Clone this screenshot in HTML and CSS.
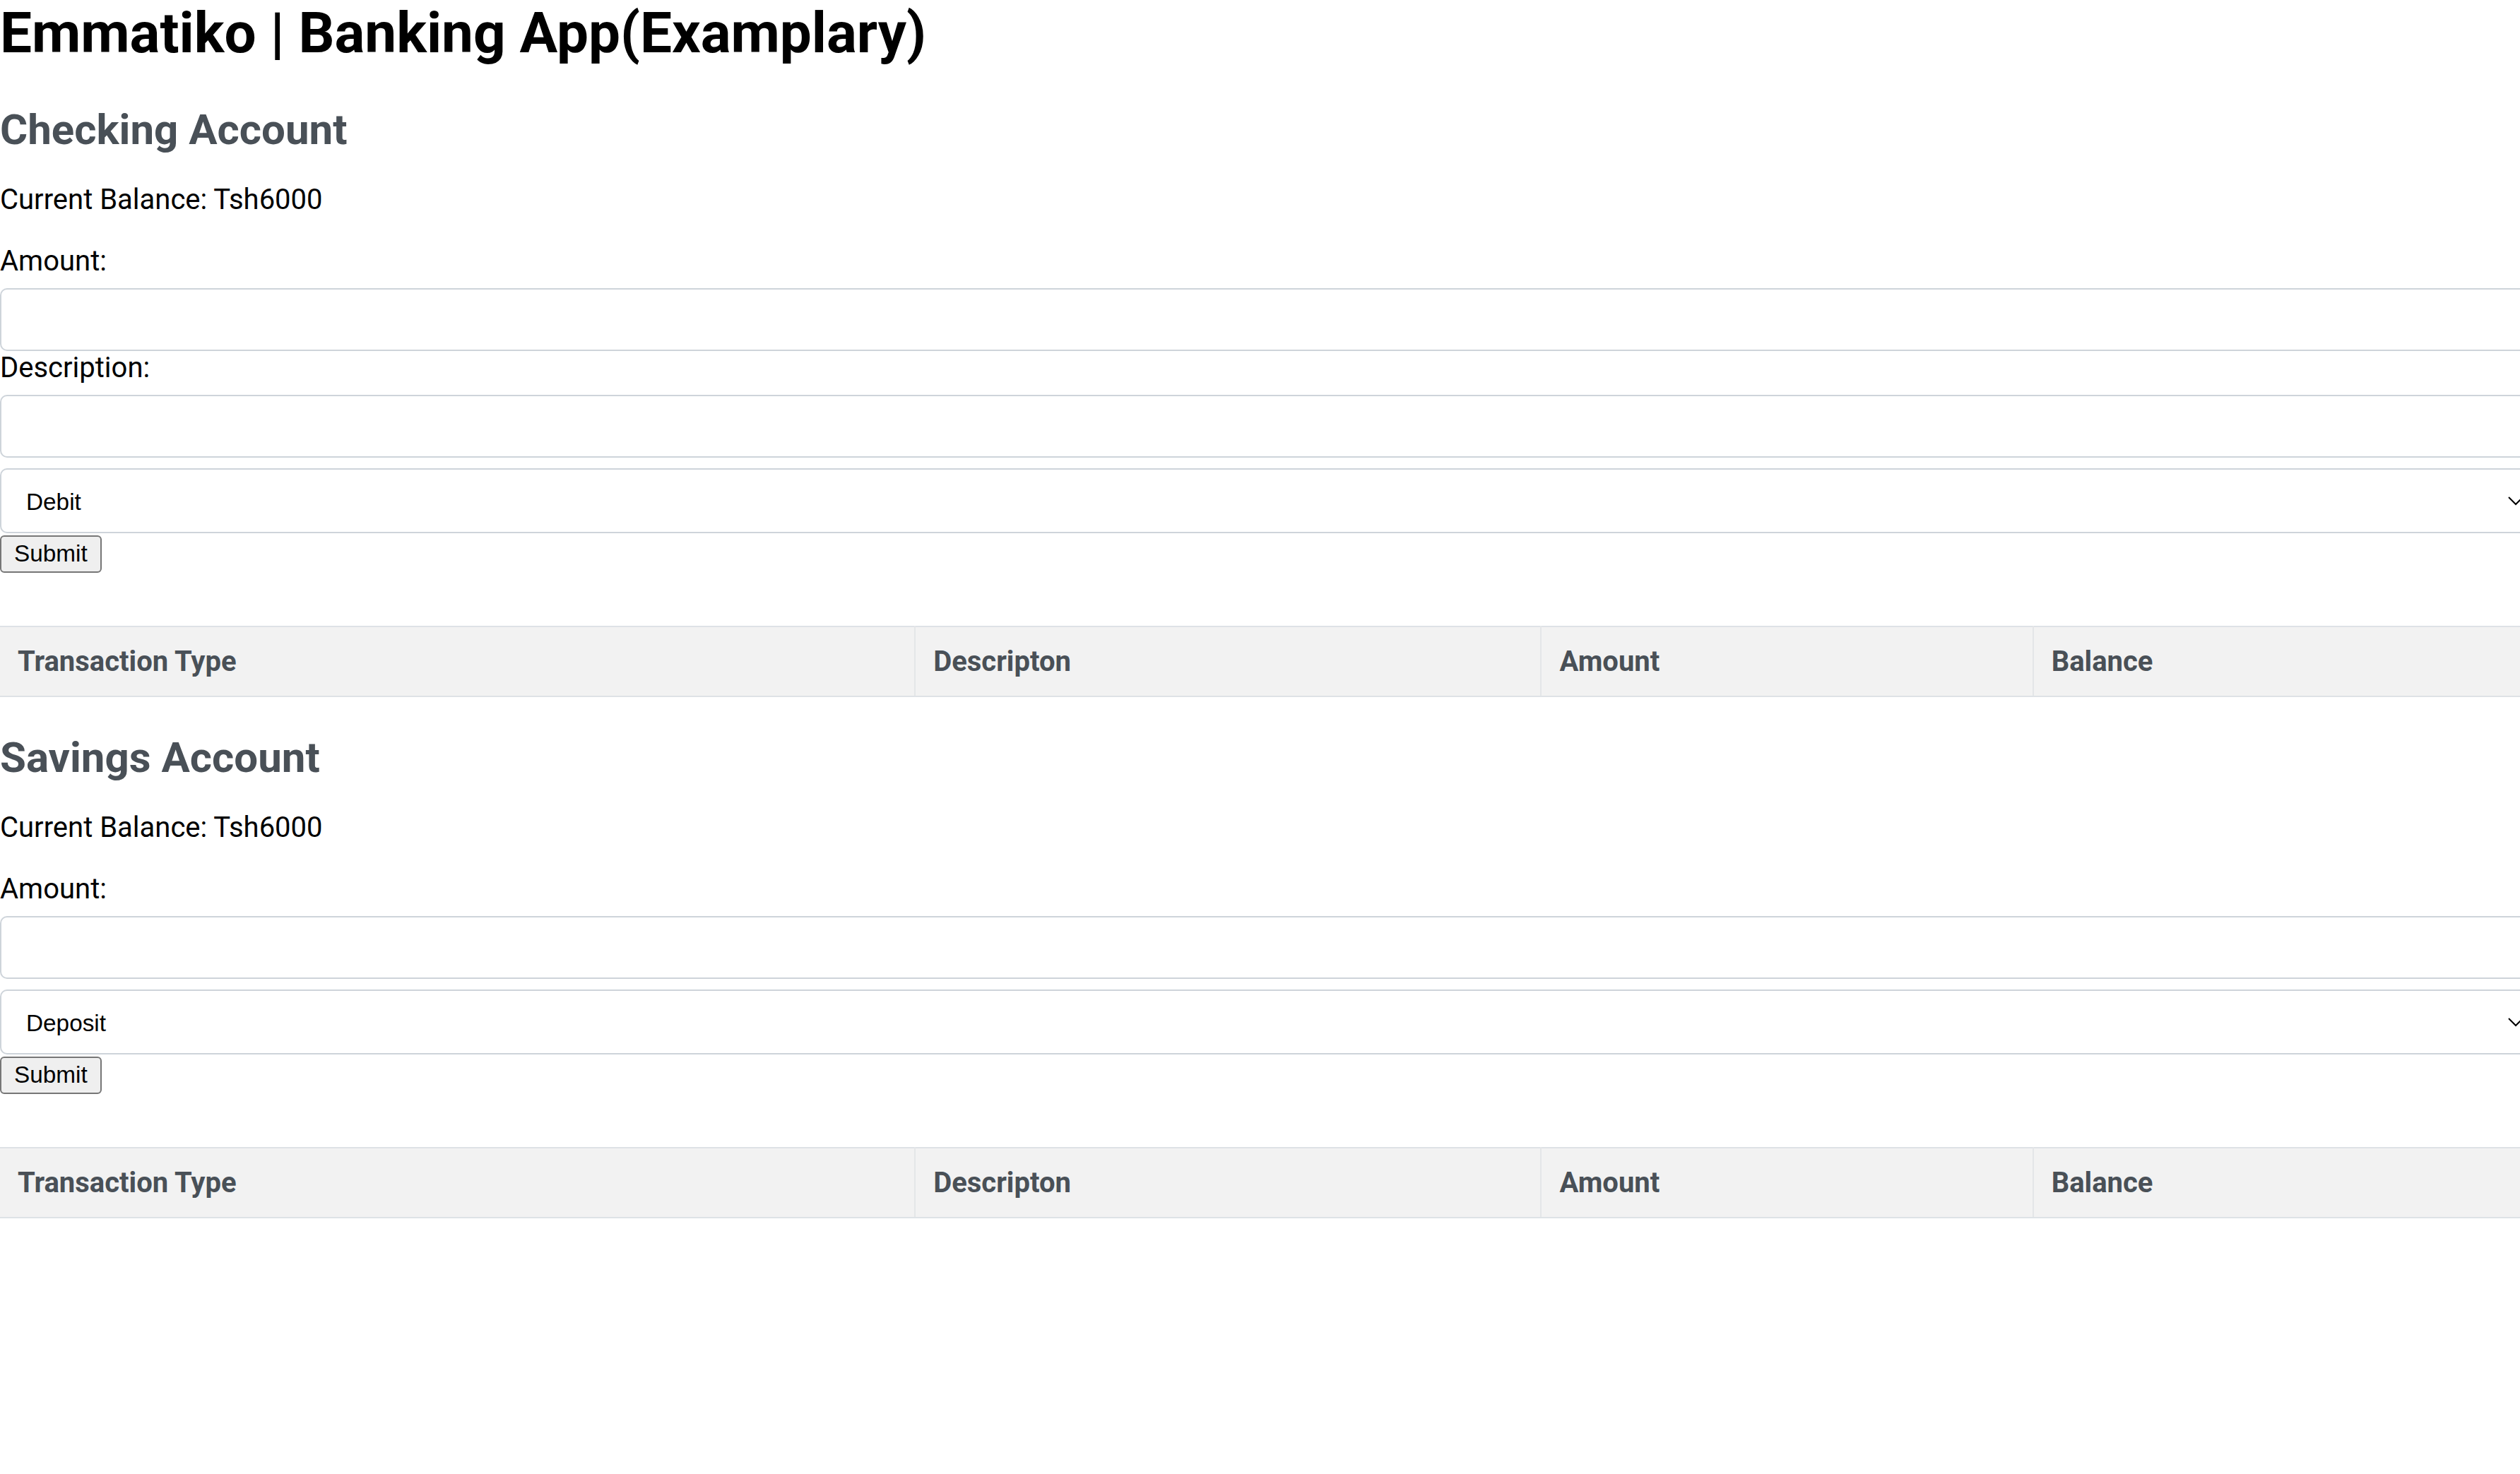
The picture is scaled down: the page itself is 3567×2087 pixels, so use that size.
FILE: index.html
```html
<!DOCTYPE html>
<html lang="en">
<head>
<meta charset="utf-8">
<title>Emmatiko | Banking App(Examplary)</title>
<link rel="stylesheet" href="styles.css">
</head>
<body>
  <main class="page">
    <h1 class="app-title">Emmatiko | Banking App(Examplary)</h1>

    <section class="account">
      <h2 class="account-title">Checking Account</h2>
      <p class="balance">Current Balance: Tsh6000</p>
      <form class="txn-form">
        <label class="field-label" for="c-amount">Amount:</label>
        <input class="field-input" id="c-amount" type="text">
        <label class="field-label" for="c-desc">Description:</label>
        <input class="field-input" id="c-desc" type="text">
        <select class="field-select">
          <option>Debit</option>
          <option>Credit</option>
        </select>
        <button class="submit-btn" type="button">Submit</button>
      </form>
      <table class="txn-table">
        <thead>
          <tr>
            <th>Transaction Type</th>
            <th>Descripton</th>
            <th>Amount</th>
            <th>Balance</th>
          </tr>
        </thead>
        <tbody></tbody>
      </table>
    </section>

    <section class="account">
      <h2 class="account-title">Savings Account</h2>
      <p class="balance">Current Balance: Tsh6000</p>
      <form class="txn-form">
        <label class="field-label" for="s-amount">Amount:</label>
        <input class="field-input" id="s-amount" type="text">
        <select class="field-select">
          <option>Deposit</option>
          <option>Withdraw</option>
        </select>
        <button class="submit-btn" type="button">Submit</button>
      </form>
      <table class="txn-table">
        <thead>
          <tr>
            <th>Transaction Type</th>
            <th>Descripton</th>
            <th>Amount</th>
            <th>Balance</th>
          </tr>
        </thead>
        <tbody></tbody>
      </table>
    </section>
  </main>
</body>
</html>
```

FILE: styles.css
```css
html {
  zoom: 2.5;
  overflow-x: hidden;
}

body {
  margin: 0;
  font-family: Roboto, "Liberation Sans", Arial, sans-serif;
  font-size: 16px;
  color: #000;
  background: #fff;
  overflow-x: hidden;
}

.page {
  display: block;
  margin-right: -6px;
}

.app-title {
  font-size: 32px;
  font-weight: 700;
  margin: 0 0 21.44px;
  line-height: normal;
}

.account-title {
  font-size: 24px;
  font-weight: 700;
  color: #495057;
  margin: 20px 0 16px;
  line-height: normal;
}

.balance {
  margin: 16px 0;
  line-height: normal;
}

.txn-form {
  margin: 0;
}

.field-label {
  display: block;
  line-height: normal;
}

.field-input {
  display: block;
  box-sizing: content-box;
  width: 100%;
  height: 14px;
  margin: 6px 0 0;
  padding: 10px;
  border: 1px solid #ced4da;
  border-radius: 4px;
  font-family: "Liberation Sans", Arial, sans-serif;
  font-size: 13.333px;
  background: #fff;
}

.field-select {
  display: block;
  box-sizing: border-box;
  width: 100%;
  height: 37px;
  margin: 6px 0 0;
  padding: 10px;
  border: 1px solid #ced4da;
  border-radius: 4px;
  font-family: "Liberation Sans", Arial, sans-serif;
  font-size: 13.333px;
  color: #000;
  background-color: #fff;
}

.submit-btn {
  display: block;
  margin: 1px 0 0;
  font-family: "Liberation Sans", Arial, sans-serif;
  font-size: 13.333px;
}

.txn-table {
  width: 100%;
  border-collapse: collapse;
  margin-top: 30px;
}

.txn-table th {
  text-align: left;
  padding: 10px;
  background: #f2f2f2;
  color: #495057;
  font-weight: 700;
  font-size: 16px;
  line-height: normal;
  border-top: 1px solid #dee2e6;
  border-bottom: 1px solid #dee2e6;
  border-left: 1px solid #e4e6e8;
  border-right: 1px solid #e4e6e8;
}

.txn-table th:first-child {
  border-left: none;
}
```
